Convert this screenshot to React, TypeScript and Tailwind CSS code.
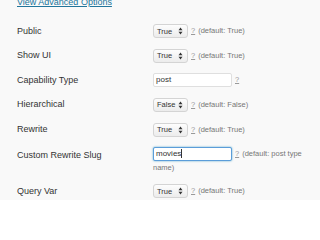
import React from 'react';

function Arrows() {
  return (
    <svg width="5" height="8" viewBox="0 0 5 8" className="ml-auto shrink-0">
      <path d="M0.5 3.2 L2.5 0.6 L4.5 3.2 Z" fill="#333" />
      <path d="M0.5 4.8 L2.5 7.4 L4.5 4.8 Z" fill="#333" />
    </svg>
  );
}

function Select({ value }: { value: string }) {
  return (
    <div className="flex items-center shrink-0 w-[35px] h-[14px] pl-[3px] pr-[4px] border border-[#d4d4d4] rounded-[3px] bg-gradient-to-b from-[#fdfdfd] to-[#ececec] text-[7.5px] text-[#333]">
      <span>{value}</span>
      <Arrows />
    </div>
  );
}

function Help({ text }: { text?: string }) {
  return (
    <span className="text-[7.5px] text-[#777] leading-[12px] whitespace-nowrap">
      <span className="underline text-[#999] mx-[3px]">?</span>
      {text}
    </span>
  );
}

function Row({ label, children }: { label: string; children: React.ReactNode }) {
  return (
    <div className="flex items-center h-[24.6px]">
      <div className="w-[136px] shrink-0 text-[9px] text-[#333]">{label}</div>
      <div className="flex-1 flex items-center">{children}</div>
    </div>
  );
}

export default function App() {
  return (
    <div
      className="w-[320px] h-[200px] overflow-hidden bg-[#f9f9f9] pl-[17px]"
      style={{ fontFamily: '"Liberation Sans", Arial, sans-serif' }}
    >
      <a className="block text-[9px] text-[#21759b] underline mt-[-4px] leading-[12px]">View Advanced Options</a>
      <div className="mt-[11px]">
        <Row label="Public">
          <Select value="True" />
          <Help text="(default: True)" />
        </Row>
        <Row label="Show UI">
          <Select value="True" />
          <Help text="(default: True)" />
        </Row>
        <Row label="Capability Type">
          <div className="w-[79px] h-[14px] border border-[#dfdfdf] bg-white rounded-[2px] text-[8px] text-[#333] pl-[2px] flex items-center">post</div>
          <Help />
        </Row>
        <Row label="Hierarchical">
          <Select value="False" />
          <Help text="(default: False)" />
        </Row>
        <Row label="Rewrite">
          <Select value="True" />
          <Help text="(default: True)" />
        </Row>
        <div className="flex h-[37px] pt-[5px]">
          <div className="w-[136px] shrink-0 text-[9px] text-[#333] pt-[2px]">Custom Rewrite Slug</div>
          <div className="w-[160px] text-[7.5px] text-[#777] leading-[14px]">
            <span className="inline-flex align-top items-center w-[79px] h-[14px] border border-[#5b9dd9] shadow-[0_0_2px_rgba(30,140,190,0.8)] bg-white rounded-[2px] text-[8px] text-[#333] pl-[2px]">
              movies<span className="inline-block w-px h-[9px] bg-[#333]" />
            </span>
            <span className="underline text-[#999] mx-[3px]">?</span>(default: post type name)
          </div>
        </div>
        <Row label="Query Var">
          <Select value="True" />
          <Help text="(default: True)" />
        </Row>
      </div>
    </div>
  );
}
